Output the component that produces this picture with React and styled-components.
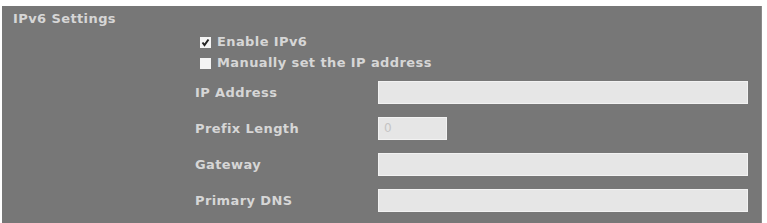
import React from "react";
import styled, { createGlobalStyle } from "styled-components";

const Global = createGlobalStyle`
  body {
    margin: 0;
    background: #ffffff;
    font-family: "DejaVu Sans", Verdana, sans-serif;
  }
`;

const Panel = styled.div`
  margin: 6px 0 0 2px;
  width: 760px;
  height: 217px;
  background: #777777;
  color: #d6d6d6;
  font-size: 13px;
  font-weight: bold;
  letter-spacing: 0.4px;
  padding-top: 5px;
  box-sizing: border-box;
  border-right: 1px solid #8a8a8a;
`;

const Title = styled.div`
  margin-left: 11px;
  line-height: 16px;
`;

const Options = styled.div`
  margin: 7px 0 0 198px;
  display: flex;
  flex-direction: column;
  gap: 5px;
`;

const Option = styled.label`
  display: flex;
  align-items: center;
  gap: 6px;
  line-height: 16px;
`;

const Box = styled.span`
  width: 11px;
  height: 11px;
  background: #f4f4f4;
  display: flex;
  align-items: center;
  justify-content: center;
`;

const Form = styled.div`
  margin: 10px 0 0 193px;
  display: flex;
  flex-direction: column;
  gap: 13px;
`;

const Row = styled.div`
  display: flex;
  align-items: center;
  height: 23px;
`;

const Label = styled.span`
  width: 183px;
`;

const Field = styled.div`
  width: ${(p) => p.$w}px;
  height: 23px;
  box-sizing: border-box;
  background: #e6e6e6;
  border: 1px solid #f2f2f2;
  color: #c4c4c4;
  font-weight: normal;
  font-size: 12px;
  line-height: 21px;
  padding-left: 5px;
`;

function Check({ checked }) {
  return (
    <Box>
      {checked && (
        <svg width="9" height="9" viewBox="0 0 9 9">
          <path d="M1.5 4.5 L3.5 7 L7.5 1.5" stroke="#222" strokeWidth="2" fill="none" />
        </svg>
      )}
    </Box>
  );
}

const fields = [
  { label: "IP Address", w: 370 },
  { label: "Prefix Length", w: 69, value: "0" },
  { label: "Gateway", w: 370 },
  { label: "Primary DNS", w: 370 },
];

export default function App() {
  return (
    <>
      <Global />
      <Panel>
        <Title>IPv6 Settings</Title>
        <Options>
          <Option>
            <Check checked />
            Enable IPv6
          </Option>
          <Option>
            <Check />
            Manually set the IP address
          </Option>
        </Options>
        <Form>
          {fields.map((f) => (
            <Row key={f.label}>
              <Label>{f.label}</Label>
              <Field $w={f.w}>{f.value}</Field>
            </Row>
          ))}
        </Form>
      </Panel>
    </>
  );
}
